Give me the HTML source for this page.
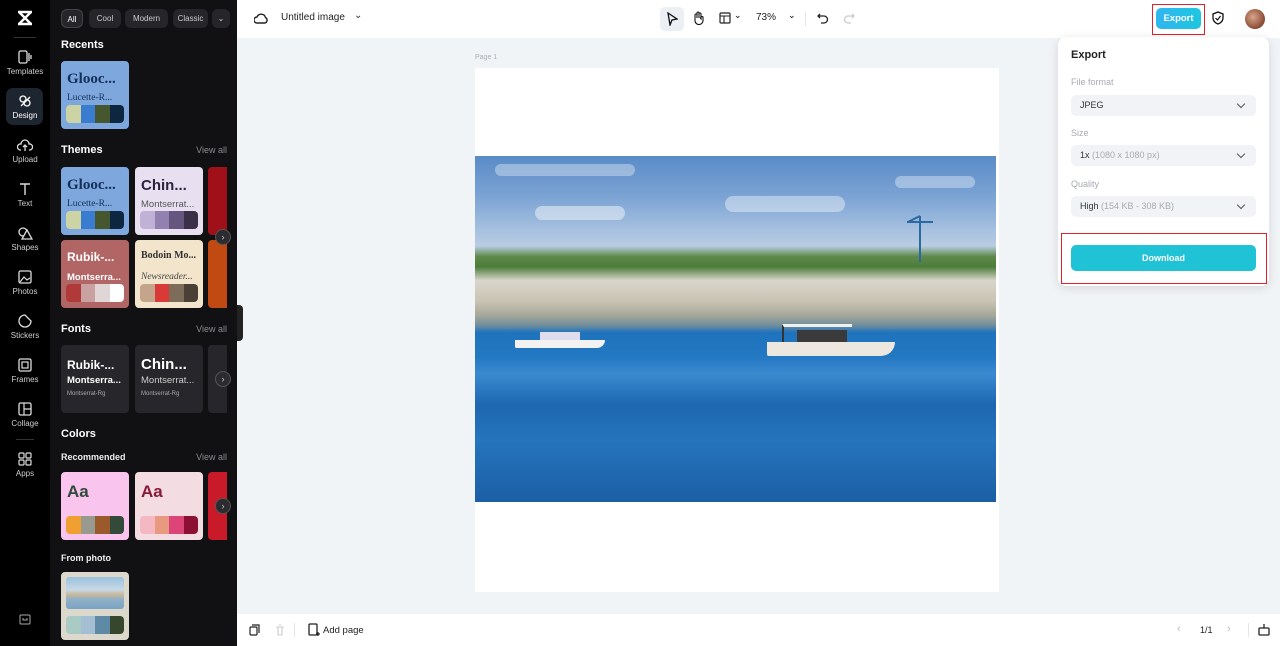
<!DOCTYPE html>
<html><head><meta charset="utf-8"><style>
*{box-sizing:border-box;margin:0;padding:0}
body{width:1280px;height:646px;overflow:hidden;font-family:"Liberation Sans",sans-serif;background:#f1f4f7;position:relative}
.abs{position:absolute}
.rail{left:0;top:0;width:50px;height:646px;background:#000}
.ri{position:absolute;left:0;width:50px;text-align:center;color:#cfcfd3;font-size:8px}
.ri svg{display:block;margin:0 auto 3px}
.panel{left:50px;top:0;width:187px;height:646px;background:#111114;color:#fff}
.chip{position:absolute;top:9px;height:19px;border-radius:6px;background:#26262a;color:#ccc;font-size:8px;line-height:19px;text-align:center}
.h{position:absolute;left:11px;font-size:11px;font-weight:bold;color:#fff}
.va{position:absolute;right:10px;font-size:9px;color:#8a8a90}
.card{position:absolute;width:68px;height:68px;border-radius:4px;overflow:hidden}
.card .t{position:absolute;left:6px;top:10px;font-size:15px;font-weight:bold;white-space:nowrap}
.card .s{position:absolute;left:6px;top:32px;font-size:9.5px;white-space:nowrap}
.sw{position:absolute;left:5px;bottom:6px;width:58px;height:18px;border-radius:4px;overflow:hidden;display:flex}
.sw i{flex:1}
.arr{position:absolute;width:16px;height:16px;border-radius:50%;background:#2c2c30;border:1px solid #555;color:#ccc;font-size:9px;line-height:14px;text-align:center}
.top{left:237px;top:0;width:1043px;height:38px;background:#fff}
.bot{left:237px;top:614px;width:1043px;height:32px;background:#fff}
.sel{position:absolute;left:13px;width:185px;height:21px;border-radius:5px;background:#f1f3f6;font-size:9px;line-height:21px;padding-left:9px;color:#333}
.sel:after{content:"";position:absolute;right:12px;top:6px;width:5px;height:5px;border-right:1.3px solid #555;border-bottom:1.3px solid #555;transform:rotate(45deg)}
.lab{position:absolute;left:13px;font-size:9px;color:#a8abb2}
</style></head><body>
<div class="abs rail">
 <div class="ri" style="top:8px"><svg width="20" height="20" viewBox="0 0 20 20"><path d="M4 4L16 16M16 4L4 16M3 4H17M3 16H17" stroke="#fff" stroke-width="2.4" fill="none"/></svg></div>
 <div style="position:absolute;left:14px;top:37px;width:22px;height:1px;background:#333"></div>
 <div class="ri" style="top:50px"><svg width="14" height="14"><rect x="1" y="1" width="8" height="12" rx="1.5" stroke="#ddd" fill="none" stroke-width="1.3"/><path d="M11 3V11M13 5V9" stroke="#ddd" stroke-width="1.3"/></svg>Templates</div>
 <div style="position:absolute;left:6px;top:88px;width:37px;height:37px;border-radius:7px;background:#1d2530"></div>
 <div class="ri" style="top:94px;color:#fff"><svg width="14" height="14"><circle cx="5" cy="5" r="3" stroke="#fff" fill="none" stroke-width="1.3"/><circle cx="9" cy="9" r="3" stroke="#fff" fill="none" stroke-width="1.3"/><path d="M3 12L12 3" stroke="#fff" stroke-width="1.3"/></svg>Design</div>
 <div class="ri" style="top:138px"><svg width="16" height="14"><path d="M4 12H3A3 3 0 0 1 4 6A4 4 0 0 1 12 6A3 3 0 0 1 13 12H12M8 13V7M6 9L8 7L10 9" stroke="#ddd" fill="none" stroke-width="1.3"/></svg>Upload</div>
 <div class="ri" style="top:182px"><svg width="14" height="14"><path d="M2 2H12M7 2V13" stroke="#ddd" stroke-width="1.4"/></svg>Text</div>
 <div class="ri" style="top:226px"><svg width="16" height="14"><circle cx="6" cy="6" r="4" stroke="#ddd" fill="none" stroke-width="1.3"/><path d="M10 4L15 13H5Z" stroke="#ddd" fill="#000" stroke-width="1.3"/></svg>Shapes</div>
 <div class="ri" style="top:270px"><svg width="14" height="14"><rect x="1" y="1" width="12" height="12" rx="1.5" stroke="#ddd" fill="none" stroke-width="1.3"/><path d="M2 12L6 7L9 10L12 8" stroke="#ddd" fill="none" stroke-width="1.2"/></svg>Photos</div>
 <div class="ri" style="top:314px"><svg width="14" height="14"><path d="M13 7A6 6 0 1 1 7 1L13 7Z" stroke="#ddd" fill="none" stroke-width="1.3"/></svg>Stickers</div>
 <div class="ri" style="top:358px"><svg width="14" height="14"><rect x="1" y="1" width="12" height="12" rx="1.5" stroke="#ddd" fill="none" stroke-width="1.3"/><rect x="4" y="4" width="6" height="6" stroke="#ddd" fill="none" stroke-width="1.2"/></svg>Frames</div>
 <div class="ri" style="top:402px"><svg width="14" height="14"><rect x="1" y="1" width="12" height="12" rx="1.5" stroke="#ddd" fill="none" stroke-width="1.3"/><path d="M6 1V13M6 7H13" stroke="#ddd" stroke-width="1.2"/></svg>Collage</div>
 <div style="position:absolute;left:16px;top:439px;width:18px;height:1px;background:#333"></div>
 <div class="ri" style="top:452px"><svg width="14" height="14"><rect x="1" y="1" width="5" height="5" rx="1" stroke="#ddd" fill="none" stroke-width="1.2"/><rect x="8" y="1" width="5" height="5" rx="1" stroke="#ddd" fill="none" stroke-width="1.2"/><rect x="1" y="8" width="5" height="5" rx="1" stroke="#ddd" fill="none" stroke-width="1.2"/><rect x="8" y="8" width="5" height="5" rx="1" stroke="#ddd" fill="none" stroke-width="1.2"/></svg>Apps</div>
 <div class="ri" style="top:614px"><svg width="12" height="11"><rect x="1" y="1" width="10" height="9" rx="1" stroke="#aaa" fill="none"/><path d="M4 4V6H8V4" stroke="#aaa" fill="none"/></svg></div>
</div>
<div class="abs panel">
 <div class="chip" style="left:11px;width:22px;border:1px solid #444;color:#fff">All</div>
 <div class="chip" style="left:39px;width:32px">Cool</div>
 <div class="chip" style="left:75px;width:43px">Modern</div>
 <div class="chip" style="left:123px;width:35px;overflow:hidden">Classic</div>
 <div class="chip" style="left:162px;width:18px">⌄</div>
 <div class="h" style="top:39px">Recents</div>
 <div class="card" style="left:11px;top:61px;background:#7ea7de"><div class="t" style="color:#123058;font-family:'Liberation Serif',serif">Glooc...</div><div class="s" style="color:#123058;font-family:'Liberation Serif',serif">Lucette-R...</div><div class="sw"><i style="background:#ccd4a6"></i><i style="background:#3a7dd0"></i><i style="background:#46562f"></i><i style="background:#0e2740"></i></div></div>
 <div class="h" style="top:144px">Themes</div><div class="va" style="top:145px">View all</div>
 <div class="card" style="left:11px;top:167px;background:#7ea7de"><div class="t" style="color:#123058;font-family:'Liberation Serif',serif">Glooc...</div><div class="s" style="color:#123058;font-family:'Liberation Serif',serif">Lucette-R...</div><div class="sw"><i style="background:#ccd4a6"></i><i style="background:#3a7dd0"></i><i style="background:#46562f"></i><i style="background:#0e2740"></i></div></div>
 <div class="card" style="left:85px;top:167px;background:#e8e0f1"><div class="t" style="color:#2d2340">Chin...</div><div class="s" style="color:#555">Montserrat...</div><div class="sw"><i style="background:#c0b2d6"></i><i style="background:#9180b0"></i><i style="background:#64567e"></i><i style="background:#3a3048"></i></div></div>
 <div class="card" style="left:158px;top:167px;width:19px;border-radius:4px 0 0 4px;background:#a01018"></div>
 <div class="card" style="left:11px;top:240px;background:#b26565"><div class="t" style="color:#fff;font-size:12px">Rubik-...</div><div class="s" style="color:#fff;font-weight:bold">Montserra...</div><div class="sw"><i style="background:#b03a3a"></i><i style="background:#c9a1a0"></i><i style="background:#e0d6d6"></i><i style="background:#fff"></i></div></div>
 <div class="card" style="left:85px;top:240px;background:#f3e5cc"><div class="t" style="color:#333;font-size:10px;font-family:'Liberation Serif',serif">Bodoin Mo...</div><div class="s" style="color:#444;font-style:italic;font-family:'Liberation Serif',serif">Newsreader...</div><div class="sw"><i style="background:#c4a58b"></i><i style="background:#d93a38"></i><i style="background:#7e6c5a"></i><i style="background:#4a4036"></i></div></div>
 <div class="card" style="left:158px;top:240px;width:19px;border-radius:4px 0 0 4px;background:#c04a12"></div>
 <div class="arr" style="left:165px;top:229px">›</div>
 <div class="h" style="top:323px">Fonts</div><div class="va" style="top:324px">View all</div>
 <div class="card" style="left:11px;top:345px;background:#27272b"><div class="t" style="color:#fff;font-size:12px;top:13px">Rubik-...</div><div class="s" style="color:#fff;font-weight:bold;top:30px">Montserra...</div><div style="position:absolute;left:6px;top:46px;font-size:6px;color:#aaa">Montserrat-Rg</div></div>
 <div class="card" style="left:85px;top:345px;background:#27272b"><div class="t" style="color:#fff;top:11px">Chin...</div><div class="s" style="color:#ccc;top:30px">Montserrat...</div><div style="position:absolute;left:6px;top:46px;font-size:6px;color:#aaa">Montserrat-Rg</div></div>
 <div class="card" style="left:158px;top:345px;width:19px;border-radius:4px 0 0 4px;background:#27272b"></div>
 <div class="arr" style="left:165px;top:371px">›</div>
 <div class="h" style="top:428px">Colors</div>
 <div style="position:absolute;left:11px;top:452px;font-size:9px;color:#eee;font-weight:bold">Recommended</div><div class="va" style="top:452px">View all</div>
 <div class="card" style="left:11px;top:472px;background:#f9c5ee"><div class="t" style="color:#2f4a3a;font-size:17px">Aa</div><div class="sw"><i style="background:#f0a030"></i><i style="background:#999a8f"></i><i style="background:#9a5a2c"></i><i style="background:#33493a"></i></div></div>
 <div class="card" style="left:85px;top:472px;background:#f3dde2"><div class="t" style="color:#8a1a3c;font-size:17px">Aa</div><div class="sw"><i style="background:#f3b8c2"></i><i style="background:#e79a80"></i><i style="background:#dd4477"></i><i style="background:#8c1034"></i></div></div>
 <div class="card" style="left:158px;top:472px;width:19px;border-radius:4px 0 0 4px;background:#c81a28"></div>
 <div class="arr" style="left:165px;top:498px">›</div>
 <div style="position:absolute;left:11px;top:553px;font-size:9px;color:#eee;font-weight:bold">From photo</div>
 <div class="card" style="left:11px;top:572px;background:#ddd8cc"><div style="position:absolute;left:5px;top:5px;width:58px;height:32px;border-radius:3px;background:linear-gradient(#9cc0dc 0,#c6d9e6 40%,#c9b89a 55%,#8fb0c8 70%,#7ba4c4)"></div><div class="sw"><i style="background:#a9cbc4"></i><i style="background:#a4bed3"></i><i style="background:#5f8aa6"></i><i style="background:#36472e"></i></div></div>
</div>
<div class="abs" style="left:237px;top:305px;width:6px;height:36px;background:#222;border-radius:0 4px 4px 0"></div>
<div class="abs top">
 <svg class="abs" style="left:17px;top:12px" width="14" height="13"><path d="M3 11A3 3 0 0 1 3 5A4.5 4.5 0 0 1 11.5 5.5A3 3 0 0 1 11 11Z" stroke="#222" fill="none" stroke-width="1.4"/></svg>
 <div class="abs" style="left:44px;top:12px;font-size:10px;color:#222">Untitled image</div>
 <div class="abs" style="left:117px;top:10px;font-size:10px;color:#333">⌄</div>
 <div class="abs" style="left:423px;top:7px;width:24px;height:24px;border-radius:5px;background:#eceff3"></div>
 <svg class="abs" style="left:429px;top:12px" width="12" height="14"><path d="M2 1L11 7L6 8L4 13Z" stroke="#111" fill="none" stroke-width="1.3"/></svg>
 <svg class="abs" style="left:455px;top:11px" width="12" height="14"><path d="M3 8V4A1 1 0 0 1 5 4V7V2A1 1 0 0 1 7 2V7V3A1 1 0 0 1 9 3V8A1 1 0 0 1 11 6V9A4 4 0 0 1 3 10Z" stroke="#111" fill="none" stroke-width="1.1"/></svg>
 <svg class="abs" style="left:482px;top:12px" width="12" height="12"><rect x="1" y="1" width="10" height="10" rx="1" stroke="#222" fill="none" stroke-width="1.2"/><path d="M1 4H11M5 4V11" stroke="#222" stroke-width="1.1"/></svg>
 <div class="abs" style="left:497px;top:10px;font-size:9px">⌄</div>
 <div class="abs" style="left:519px;top:12px;font-size:10px;color:#222">73%</div>
 <div class="abs" style="left:551px;top:10px;font-size:9px">⌄</div>
 <div class="abs" style="left:568px;top:12px;width:1px;height:14px;background:#e5e5e5"></div>
 <svg class="abs" style="left:580px;top:12px" width="12" height="12"><path d="M3 2L1 4L3 6M1 4H7A3.5 3.5 0 0 1 7 11H4" stroke="#222" fill="none" stroke-width="1.3"/></svg>
 <svg class="abs" style="left:606px;top:12px" width="12" height="12"><path d="M9 2L11 4L9 6M11 4H5A3.5 3.5 0 0 0 5 11H8" stroke="#ccc" fill="none" stroke-width="1.3"/></svg>
 <div class="abs" style="left:915px;top:4px;width:53px;height:31px;border:1.5px solid #e0202a"></div>
 <div class="abs" style="left:919px;top:8px;width:45px;height:21px;border-radius:5px;background:linear-gradient(90deg,#30b6f0,#1ec6e0);color:#fff;font-size:9.5px;font-weight:bold;text-align:center;line-height:21px">Export</div>
 <svg class="abs" style="left:975px;top:11px" width="12" height="14"><path d="M6 1L11 3V7C11 10 8.5 12 6 13C3.5 12 1 10 1 7V3Z" stroke="#111" fill="none" stroke-width="1.3"/><path d="M3.5 7L5.5 9L8.5 5" stroke="#111" fill="none" stroke-width="1.2"/></svg>
 <div class="abs" style="left:1008px;top:9px;width:20px;height:20px;border-radius:50%;background:radial-gradient(circle at 40% 40%,#d8a58a,#8a4a34 70%,#5a3020)"></div>
</div>
<div class="abs" style="left:475px;top:54px;font-size:7px;color:#aab">Page 1</div>
<div class="abs" style="left:475px;top:68px;width:524px;height:524px;background:#fff"></div>
<div class="abs" style="left:475px;top:156px;width:521px;height:346px;overflow:hidden;background:linear-gradient(180deg,#5a8bc8 0%,#7ca4d4 12%,#a9c2e0 22%,#b9cde2 26%,#5f8a4c 29%,#4c7c3a 32%,#d9d6cc 36%,#c9c3b3 42%,#a6a89a 46%,#6f8d9c 49%,#1f73bd 51%,#2378c2 58%,#3a8ad0 63%,#1d67b0 72%,#2574bc 82%,#1b5fa6 100%)">
 <div class="abs" style="left:60px;top:50px;width:90px;height:14px;border-radius:8px;background:rgba(255,255,255,.45)"></div>
 <div class="abs" style="left:250px;top:40px;width:120px;height:16px;border-radius:8px;background:rgba(255,255,255,.4)"></div>
 <div class="abs" style="left:20px;top:8px;width:140px;height:12px;border-radius:8px;background:rgba(255,255,255,.35)"></div>
 <div class="abs" style="left:420px;top:20px;width:80px;height:12px;border-radius:8px;background:rgba(255,255,255,.35)"></div>
 <svg class="abs" style="left:430px;top:58px" width="30" height="50"><path d="M15 2V48M2 8H28M15 2L3 8" stroke="#2a6aa0" stroke-width="2" fill="none"/></svg>
</div>
<div class="abs" style="left:767px;top:322px;width:130px;height:38px;">
 <div class="abs" style="left:0;top:20px;width:128px;height:14px;background:#ece8e0;border-radius:0 0 30px 4px"></div>
 <div class="abs" style="left:15px;top:2px;width:70px;height:18px;border-top:3px solid #f0f0f0;border-left:2px solid #333"></div>
 <div class="abs" style="left:30px;top:8px;width:50px;height:12px;background:#3a3a3a"></div>
</div>
<div class="abs" style="left:515px;top:330px;width:95px;height:20px;"><div class="abs" style="left:0;top:10px;width:90px;height:8px;background:#f2f2f2;border-radius:0 0 20px 4px"></div><div class="abs" style="left:25px;top:2px;width:40px;height:8px;background:#dde"></div></div>
<div class="abs" style="left:1058px;top:37px;width:211px;height:249px;background:#fff;border-radius:8px;box-shadow:0 2px 10px rgba(0,0,0,.12)">
 <div class="abs" style="left:13px;top:12px;font-size:11px;font-weight:bold;color:#222">Export</div>
 <div class="lab" style="top:40px">File format</div>
 <div class="sel" style="top:58px">JPEG</div>
 <div class="lab" style="top:91px">Size</div>
 <div class="sel" style="top:108px">1x <span style="color:#aaa">(1080 x 1080 px)</span></div>
 <div class="lab" style="top:142px">Quality</div>
 <div class="sel" style="top:159px">High <span style="color:#aaa">(154 KB - 308 KB)</span></div>
 <div class="abs" style="left:3px;top:196px;width:206px;height:51px;border:1.5px solid #e0202a"></div>
 <div class="abs" style="left:13px;top:208px;width:185px;height:26px;border-radius:5px;background:#20c3d6;color:#fff;font-size:9px;font-weight:bold;text-align:center;line-height:26px">Download</div>
</div>
<div class="abs bot">
 <svg class="abs" style="left:12px;top:10px" width="11" height="12"><rect x="1" y="3" width="7" height="8" rx="1" stroke="#222" fill="none" stroke-width="1.2"/><path d="M3 1H10V9" stroke="#222" fill="none" stroke-width="1.2"/></svg>
 <svg class="abs" style="left:38px;top:10px" width="10" height="12"><path d="M1 3H9M3 3V11H7V3M4 1H6" stroke="#ccc" fill="none" stroke-width="1.1"/></svg>
 <div class="abs" style="left:57px;top:9px;width:1px;height:14px;background:#e5e5e5"></div>
 <svg class="abs" style="left:71px;top:9px" width="12" height="14"><rect x="1" y="1" width="8" height="11" rx="1" stroke="#222" fill="none" stroke-width="1.3"/><path d="M10 9V13M8 11H12" stroke="#222" stroke-width="1.2"/></svg>
 <div class="abs" style="left:86px;top:11px;font-size:9.5px;color:#222">Add page</div>
 <div class="abs" style="left:940px;top:9px;font-size:11px;color:#bbb">‹</div>
 <div class="abs" style="left:963px;top:11px;font-size:9px;color:#222">1/1</div>
 <div class="abs" style="left:990px;top:9px;font-size:11px;color:#bbb">›</div>
 <div class="abs" style="left:1011px;top:9px;width:1px;height:14px;background:#e5e5e5"></div>
 <svg class="abs" style="left:1021px;top:9px" width="12" height="13"><rect x="1" y="5" width="10" height="7" rx="1" stroke="#222" fill="none" stroke-width="1.3"/><path d="M6 1V5" stroke="#222" stroke-width="1.3"/></svg>
</div>
</body></html>
